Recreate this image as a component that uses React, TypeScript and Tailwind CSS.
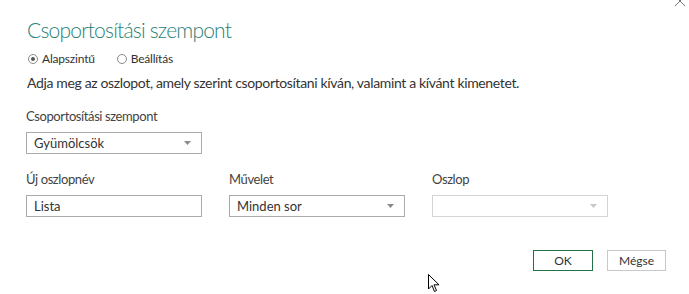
// Group-by dialog (basic mode) — static recreation
import { type ReactNode } from "react";

function Caret({ muted = false }: { muted?: boolean }) {
  return (
    <svg width="7" height="4" viewBox="0 0 7 4" className="shrink-0">
      <path d="M0 0 L7 0 L3.5 4 Z" fill={muted ? "#c8c8c8" : "#8a8a8a"} />
    </svg>
  );
}

function Select({ value, disabled = false }: { value?: string; disabled?: boolean }) {
  return (
    <div
      className={
        "flex h-[22px] w-[176px] items-center justify-between border pl-[7px] pr-[10px] text-[13px] text-[#333] " +
        (disabled ? "border-[#d4d4d4]" : "border-[#ababab]")
      }
    >
      <span className="leading-none">{value}</span>
      <Caret muted={disabled} />
    </div>
  );
}

function Field({ label, children }: { label: string; children: ReactNode }) {
  return (
    <div className="flex w-[176px] flex-col gap-[7px]">
      <span className="text-[13px] leading-[18px] tracking-[-0.4px] text-[#444]">{label}</span>
      {children}
    </div>
  );
}

function Radio({ checked, label }: { checked?: boolean; label: string }) {
  return (
    <label className="flex items-center gap-[4px]">
      <span className="flex h-[10px] w-[10px] items-center justify-center rounded-full border border-[#8a8a8a] bg-white">
        {checked && <span className="h-[4px] w-[4px] rounded-full bg-[#555]" />}
      </span>
      <span className="text-[12px] leading-none tracking-[-0.2px] text-[#333]">{label}</span>
    </label>
  );
}

export default function App() {
  return (
    <div
      className="relative h-[294px] w-[689px] overflow-hidden bg-white"
      style={{ fontFamily: 'Lato, "Noto Sans", sans-serif' }}
    >
      {/* close X, clipped by the top edge */}
      <svg width="12" height="12" viewBox="0 0 12 12" className="absolute right-[3px] top-[-5px]">
        <path d="M1 1 L11 11 M11 1 L1 11" stroke="#777" strokeWidth="1" />
      </svg>

      <div className="flex flex-col pl-[27px] pt-[16px]">
        <h1 className="text-[21px] font-light leading-[28px] tracking-[-0.8px] text-[#2a7f76]">
          Csoportosítási szempont
        </h1>

        <div className="mt-[9px] flex items-center gap-[22px] pl-[1px]">
          <Radio checked label="Alapszintű" />
          <Radio label="Beállítás" />
        </div>

        <p className="mt-[9px] text-[14px] leading-[18px] tracking-[-0.35px] text-[#333]">
          Adja meg az oszlopot, amely szerint csoportosítani kíván, valamint a kívánt kimenetet.
        </p>

        <div className="mt-[15px] -ml-[1px]">
          <Field label="Csoportosítási szempont">
            <Select value="Gyümölcsök" />
          </Field>
        </div>

        <div className="mt-[16px] -ml-[1px] flex gap-[27px]">
          <Field label="Új oszlopnév">
            <div className="flex h-[22px] w-[176px] items-center border border-[#ababab] pl-[7px] text-[13px] leading-none text-[#333]">
              Lista
            </div>
          </Field>
          <Field label="Művelet">
            <Select value="Minden sor" />
          </Field>
          <Field label="Oszlop">
            <Select disabled />
          </Field>
        </div>

        <div className="mt-[33px] flex justify-end gap-[14px] pr-[23px]">
          <button className="h-[21px] w-[60px] border border-[#217346] text-[12px] leading-none text-[#333]">OK</button>
          <button className="h-[21px] w-[59px] border border-[#c8c8c8] text-[12px] leading-none text-[#333]">Mégse</button>
        </div>
      </div>

      {/* mouse pointer */}
      <svg width="12" height="19" viewBox="0 0 12 19" className="absolute left-[428px] top-[274px]">
        <path d="M0.5 0.5 L0.5 15 L4 11.5 L6.5 17.5 L8.5 16.5 L6 10.8 L11 10.8 Z" fill="white" stroke="#000" strokeWidth="1" />
      </svg>
    </div>
  );
}
